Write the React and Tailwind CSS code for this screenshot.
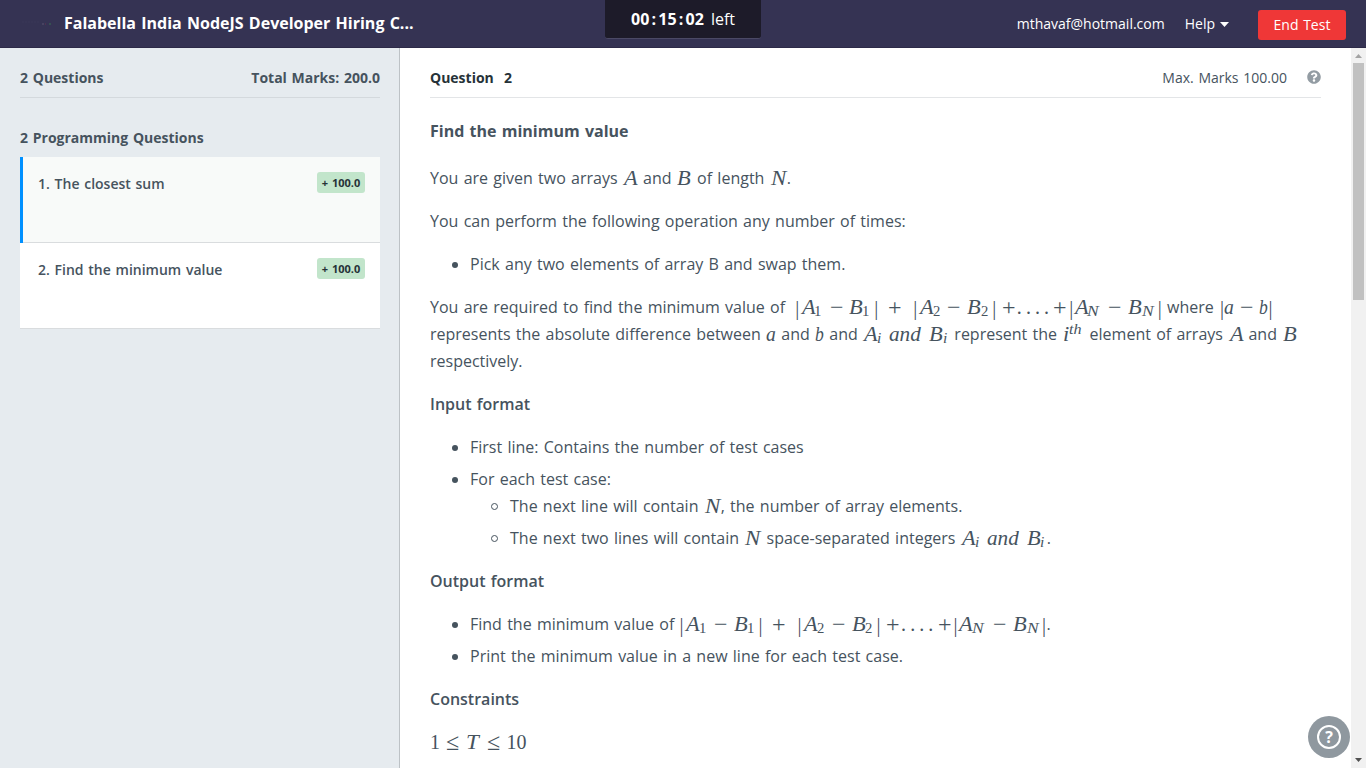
import { FaQuestionCircle } from "react-icons/fa";

const glyph = "inline-block shrink-0 whitespace-pre text-left font-['Liberation_Serif',serif] text-[20px] leading-none";

function V({ w, s = "scale-x-[1.12]", children }) {
  return (
    <span className={`${glyph} ${w} italic`}>
      <span className={`inline-block origin-left ${s}`}>{children}</span>
    </span>
  );
}
function Lower({ w, s = "scale-x-[0.98]", children }) {
  return (
    <span className={`${glyph} ${w} italic`}>
      <span className={`inline-block origin-left text-[20px] leading-none ${s}`}>{children}</span>
    </span>
  );
}
function R({ w, children }) {
  return <span className={`${glyph} ${w}`}>{children}</span>;
}
function Bar({ w }) {
  return (
    <span className={`${glyph} ${w}`}>
      <span className="inline-block origin-center scale-y-110">|</span>
    </span>
  );
}
function Op({ w, children }) {
  return (
    <span className={`${glyph} ${w}`}>
      <span className="inline-block origin-left scale-[1.2]">{children}</span>
    </span>
  );
}
function Sub({ w, children, up = false, s = "scale-x-[1.1]" }) {
  return (
    <span className={`${glyph} ${w} italic relative ${up ? "-top-[7px]" : "top-[2px]"}`}>
      <span className={`inline-block text-[14px] leading-none origin-left ${s}`}>{children}</span>
    </span>
  );
}
function SubNum({ w, children }) {
  return (
    <span className={`${glyph} ${w} relative top-[2px]`}>
      <span className="inline-block text-[14px] leading-none origin-left scale-x-[1.05]">{children}</span>
    </span>
  );
}
function Math({ w = "", children }) {
  return <span className={`relative top-px inline-flex items-baseline h-5 leading-none align-baseline ${w}`}>{children}</span>;
}

function SumFormula({ w }) {
  return (
    <Math w={w}>
      <Bar w="w-[6.5px]" /><V w="w-[12.5px]">A</V><SubNum w="w-[15.500px]">1</SubNum>
      <Op w="w-[19.5px]">−</Op><V w="w-[13px]">B</V><SubNum w="w-[12px]">1</SubNum>
      <Bar w="w-[13.5px]" /><Op w="w-[25.5px]">+</Op>
      <Bar w="w-[6.5px]" /><V w="w-[13px]">A</V><SubNum w="w-[14.500px]">2</SubNum>
      <Op w="w-[20px]">−</Op><V w="w-[13.5px]">B</V><SubNum w="w-[11.5px]">2</SubNum>
      <Bar w="w-[9.5px]" /><Op w="w-[15px]">+</Op>
      <span className={`${glyph} w-[36.5px] tracking-[4.1px]`}>....</span><Op w="w-[16px]">+</Op>
      <Bar w="w-[5.5px]" /><V w="w-[12.5px]">A</V><Sub w="w-[21px]" s="scale-x-[1.25]">N</Sub>
      <Op w="w-[20px]">−</Op><V w="w-[14px]">B</V><Sub w="w-[15.5px]" s="scale-x-[1.25]">N</Sub><Bar w="w-[4px]" />
    </Math>
  );
}

function AiAndBi() {
  return (
    <Math w="w-[86px]">
      <V w="ml-px w-[13px]">A</V><Sub w="w-[12px]">i</Sub><V w="w-[40px]" s="scale-x-[1.06]">and</V><V w="w-[13.5px]">B</V><Sub w="w-[6.5px]">i</Sub>
    </Math>
  );
}

const A = () => <Math w="w-[15px]"><V w="ml-[1.5px] w-[13.5px]">A</V></Math>;
const B = () => <Math w="w-[15px]"><V w="ml-[0.5px] w-[14.5px]">B</V></Math>;
const N = () => <Math w="w-[17px]"><V w="ml-px w-4" s="scale-x-[1.15]">N</V></Math>;

function Item({ children }) {
  return (
    <li className="flex items-start">
      <span className="mt-[11px] ml-[22px] mr-3 size-1.5 shrink-0 rounded-full bg-[#46535e]" />
      <div>{children}</div>
    </li>
  );
}
function SubItem({ children }) {
  return (
    <li className="flex items-start">
      <span className="mt-2.5 ml-[21px] mr-3 size-[7px] shrink-0 rounded-full border border-[#46535e]" />
      <div>{children}</div>
    </li>
  );
}

function QuestionRow({ title, active }) {
  return (
    <div className={`flex h-[86px] justify-between border-b border-[#d9dcde] pr-[15px] ${active ? "bg-[#f8faf9]" : "bg-white"}`}>
      <div className="flex">
        <div className={active ? "-mb-px w-[3px] bg-[#0090ff]" : "w-[3px]"} />
        <span className="mt-[17px] ml-[15px] text-[14px] leading-5 font-semibold">{title}</span>
      </div>
      <span className="mt-[15px] flex h-[21px] w-12 items-center justify-center rounded-[3px] bg-[#c2e5cb] pt-0.5 text-[11px] font-bold text-[#263238]">+ 100.0</span>
    </div>
  );
}

function Header() {
  return (
    <header className="flex h-12 shrink-0 justify-between border-b border-[#2d2a48] bg-[#353353] text-white">
      <div className="flex w-[605px] items-center">
        <svg className="mr-3 ml-5" width="32" height="6" viewBox="0 0 32 6">
          <path d="M2 1h18" stroke="#3b3958" strokeDasharray="2 1" />
          <path d="M22 3h2" stroke="#5a5570" /><path d="M25 3h1" stroke="#663050" /><path d="M30 2v2" stroke="#397052" />
        </svg>
        <h1 className="-mt-px text-[16px] font-bold">Falabella India NodeJS Developer Hiring C...</h1>
      </div>
      <div className="flex h-[39px] w-[156px] items-center justify-center gap-[7px] rounded-b-[3px] border-b border-[#4b4965] bg-[#1d1b29] text-[16px]">
        <span className="flex font-bold"><span>00</span><span className="w-[9px] text-center">:</span><span>15</span><span className="w-[9px] text-center">:</span><span>02</span></span>
        <span>left</span>
      </div>
      <div className="flex w-[605px] items-start justify-end pr-5 text-[14px]">
        <span className="mt-[13px] leading-[21px]">mthavaf@hotmail.com</span>
        <span className="mt-[13px] ml-5 leading-[21px]">Help</span>
        <svg className="mt-[22px] ml-[5px]" width="9" height="5" viewBox="0 0 9 5"><path d="M0 0h9L4.500 5z" fill="white" /></svg>
        <button className="mt-2.5 ml-[29px] h-[30px] w-[88px] rounded-[3px] bg-[#ef3737] pb-0.5 [word-spacing:1px]">End Test</button>
      </div>
    </header>
  );
}

function Sidebar() {
  return (
    <aside className="w-[400px] shrink-0 border-r border-[#bdc2c6] bg-[#e6ebef] px-5 pr-[19px] text-[14px] font-bold">
      <div className="flex h-[50px] justify-between border-b border-[#d4d9dd] pt-[19px] leading-[21px]">
        <span>2 Questions</span><span>Total Marks: 200.0</span>
      </div>
      <h2 className="mt-[29px] mb-[9px] leading-[21px]">2 Programming Questions</h2>
      <QuestionRow title="1. The closest sum" active />
      <QuestionRow title="2. Find the minimum value" />
    </aside>
  );
}

export default function App() {
  return (
    <div className="relative flex h-[768px] w-[1366px] flex-col overflow-hidden bg-white font-['Open_Sans',sans-serif] text-[#46535e] [word-spacing:1.1px]">
      <Header />
      <div className="flex min-h-0 flex-1">
        <Sidebar />
        <main className="w-[951px] overflow-hidden pr-[30px] pl-[30px]">
          <div className="flex h-[50px] justify-between border-b border-[#e3e5e7] pt-[19px] text-[14px] leading-[21px]">
            <span className="font-bold whitespace-pre text-[#263238] [word-spacing:1.5px]">Question  2</span>
            <span className="flex">Max. Marks 100.00
              <FaQuestionCircle className="mt-[3px] ml-5 size-3.5 text-[#939ca3]" />
            </span>
          </div>
          <article className="w-[893px] pt-5 text-[16px] leading-[27px] whitespace-nowrap">
            <h2 className="mb-5 font-bold">Find the minimum value</h2>
            <p className="mb-4">You are given two arrays <A /> and <B /> of length <N />.</p>
            <p className="mb-4">You can perform the following operation any number of times:</p>
            <ul className="mb-4"><Item>Pick any two elements of array B and swap them.</Item></ul>
            <div className="mb-4">
              <div className="h-[27px]">You are required to find the minimum value of <SumFormula w="ml-[5px] w-[366.5px]" /> where <Math w="ml-px w-[53px]"><Bar w="w-[4px]" /><Lower w="w-[16px]">a</Lower><Op w="w-[19px]">−</Op><Lower w="w-[9.5px]" s="scale-x-[0.88]">b</Lower><Bar w="w-[4px]" /></Math></div>
              <div className="h-[27px]">represents the absolute difference between <Math w="w-[10px]"><Lower w="w-[10px]">a</Lower></Math> and <Math w="w-[9px]"><Lower w="w-[9px]" s="scale-x-[0.88]">b</Lower></Math> and <AiAndBi /> represent the <Math w="w-[22px]"><V w="ml-px w-[6px]">i</V><Sub up w="w-[14px]" s="scale-x-[1.15]">th</Sub></Math> element of arrays <A /> and <B /></div>
              <div className="h-[27px]">respectively.</div>
            </div>
            <h3 className="mb-4 font-semibold">Input format</h3>
            <ul className="mb-4 flex flex-col gap-[5px]">
              <Item>First line: Contains the number of test cases</Item>
              <Item>For each test case:
                <ul className="flex flex-col gap-[5px]">
                  <SubItem>The next line will contain <N />, the number of array elements.</SubItem>
                  <SubItem>The next two lines will contain <N /> space-separated integers <AiAndBi />.</SubItem>
                </ul>
              </Item>
            </ul>
            <h3 className="mb-4 font-semibold">Output format</h3>
            <ul className="mb-4 flex flex-col gap-[5px]">
              <Item>Find the minimum value of <SumFormula w="w-[367px]" />.</Item>
              <Item>Print the minimum value in a new line for each test case.</Item>
            </ul>
            <h3 className="mb-4 font-semibold">Constraints</h3>
            <Math><R w="w-4">1</R><Op w="w-[20px]">≤</Op><V w="w-[21px]" s="scale-x-[1.15]">T</V><Op w="w-[19.5px]">≤</Op><R w="w-5">10</R></Math>
          </article>
        </main>
        <div className="flex w-[15px] flex-col items-center bg-[#f1f1f1]">
          <svg className="h-[15px] shrink-0" width="15" height="15" viewBox="0 0 15 15"><path d="M4 10h7L7.500 6z" fill="#a3a3a3" /></svg>
          <div className="h-[237px] w-[11px] bg-[#c1c1c1]" />
          <svg className="mt-auto h-[15px] shrink-0" width="15" height="15" viewBox="0 0 15 15"><path d="M4 5h7L7.500 9z" fill="#505050" /></svg>
        </div>
      </div>
      <div className="absolute top-[716px] left-[1308px] flex size-[42px] items-center justify-center rounded-full bg-[#8f989f]">
        <div className="flex size-6 items-center justify-center rounded-full border-2 border-white text-[16px] leading-none font-bold text-white">?</div>
      </div>
    </div>
  );
}
